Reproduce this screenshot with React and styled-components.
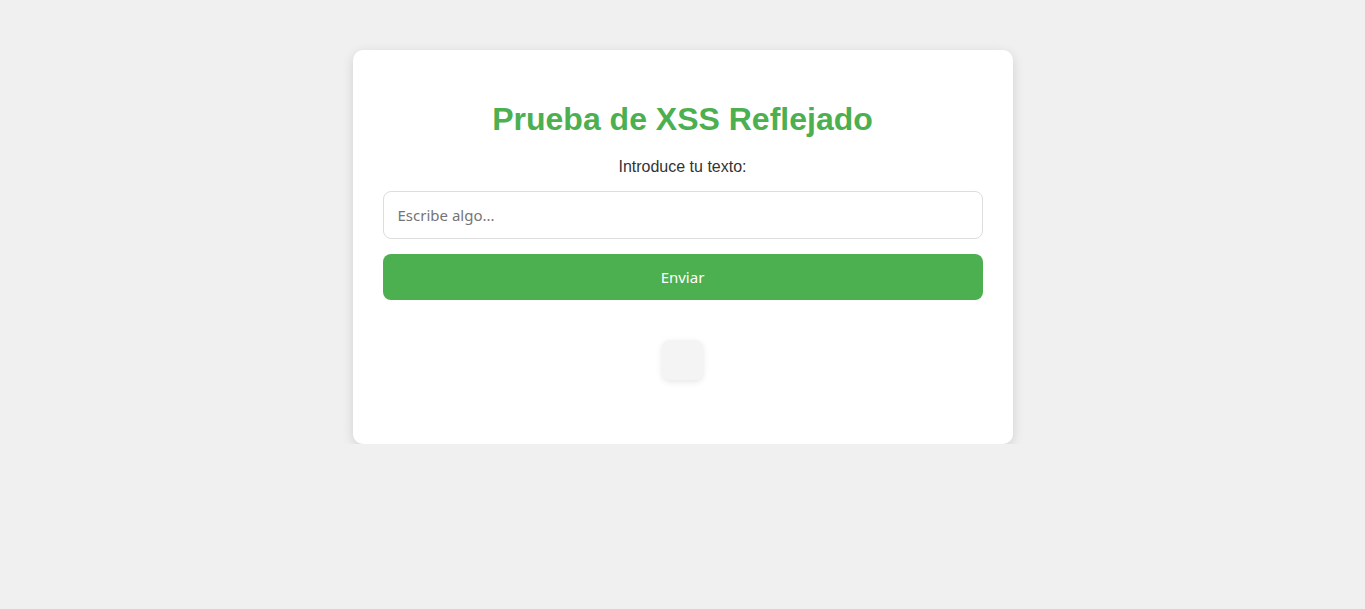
import React from "react";
import styled, { createGlobalStyle } from "styled-components";

const GlobalStyle = createGlobalStyle`
  body {
    margin: 0;
    background: #f0f0f0;
    font-family: "Liberation Sans", Arial, sans-serif;
  }
`;

const Page = styled.div`
  padding-top: 50px;
`;

const Card = styled.div`
  width: 600px;
  margin: 0 auto;
  padding: 30px;
  background: #fff;
  border-radius: 10px;
  box-shadow: 0 3px 12px rgba(0, 0, 0, 0.13);
`;

const Title = styled.h1`
  margin: 21px 0 20px;
  font-size: 32px;
  font-weight: bold;
  color: #4caf50;
  text-align: center;
`;

const Label = styled.label`
  display: block;
  font-size: 16px;
  color: #333;
  text-align: center;
`;

const Input = styled.input`
  display: block;
  box-sizing: border-box;
  width: 100%;
  height: 48px;
  margin-top: 15px;
  padding: 0 14px;
  border: 1px solid #ddd;
  border-radius: 8px;
  font-family: "Noto Sans", sans-serif;
  font-size: 15px;
  color: #333;
  outline: none;

  &::placeholder {
    color: #757575;
  }
`;

const Button = styled.button`
  display: block;
  width: 100%;
  height: 46px;
  margin-top: 15px;
  border: none;
  border-radius: 8px;
  background: #4caf50;
  color: #fff;
  font-family: "Noto Sans", sans-serif;
  font-size: 15px;
  cursor: pointer;
`;

const Result = styled.div`
  width: 41px;
  height: 40px;
  margin: 40px auto 34px;
  background: #f4f4f4;
  border-radius: 8px;
  box-shadow: 0 2px 6px rgba(0, 0, 0, 0.1);
`;

export default function App() {
  return (
    <Page>
      <GlobalStyle />
      <Card>
        <Title>Prueba de XSS Reflejado</Title>
        <Label htmlFor="texto">Introduce tu texto:</Label>
        <Input id="texto" type="text" placeholder="Escribe algo..." />
        <Button type="button">Enviar</Button>
        <Result />
      </Card>
    </Page>
  );
}
